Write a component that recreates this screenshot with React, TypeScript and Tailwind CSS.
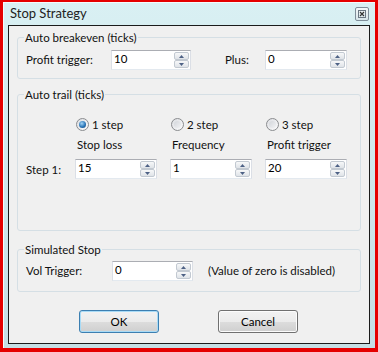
import React from "react";

function Spin({ value, w }: { value: string; w: string }) {
  return (
    <div className={`flex h-[20px] ${w} border border-[#abadb3] border-x-[#dbdfe6] border-b-[#e3e9ef] bg-white`}>
      <div className="flex-1 pl-[2px] leading-[16px] text-black">{value}</div>
      <div className="flex w-[16px] flex-col py-[1px] pr-[1px]">
        <div className="flex h-[8px] items-center justify-center rounded-[2px] border border-[#c2c9d1] bg-gradient-to-b from-[#f7f8f9] to-[#dfe3e8]">
          <svg width="5" height="3" viewBox="0 0 5 3">
            <path d="M0 3 L2.5 0 L5 3 Z" fill="#4d6185" />
          </svg>
        </div>
        <div className="flex h-[8px] items-center justify-center rounded-[2px] border border-[#c2c9d1] bg-gradient-to-b from-[#f7f8f9] to-[#dfe3e8]">
          <svg width="5" height="3" viewBox="0 0 5 3">
            <path d="M0 0 L5 0 L2.5 3 Z" fill="#4d6185" />
          </svg>
        </div>
      </div>
    </div>
  );
}

function Radio({ label, checked }: { label: string; checked?: boolean }) {
  return (
    <div className="flex items-center gap-[3px]">
      <div className="flex h-[13px] w-[13px] items-center justify-center rounded-full border border-[#8a8c8f] bg-gradient-to-br from-[#dcdee2] to-[#fbfbfc]">
        {checked ? (
          <div className="h-[7px] w-[7px] rounded-full bg-[radial-gradient(circle_at_40%_35%,#a4d4f5,#2b77b9_55%,#0d3b6e)]" />
        ) : (
          <div className="h-[7px] w-[7px] rounded-full bg-gradient-to-br from-[#d3d6db] to-[#f1f2f4]" />
        )}
      </div>
      <span>{label}</span>
    </div>
  );
}

function Group({ title, h, children }: { title: string; h: string; children: React.ReactNode }) {
  return (
    <div className={`${h} rounded-[3px] border border-[#d5dfe5] px-[8px]`}>
      <div className="-mt-[8px] -ml-[2px] w-fit bg-[#f0f0f0] px-[1px] leading-[15px]">{title}</div>
      {children}
    </div>
  );
}

function Btn({ label, focus }: { label: string; focus?: boolean }) {
  return (
    <div
      className={`flex h-[23px] w-[80px] items-center justify-center rounded-[3px] border ${
        focus ? "border-[#3c7fb1] shadow-[inset_0_0_0_1px_#a9dbf6]" : "border-[#707070] shadow-[inset_0_0_0_1px_#fcfcfc]"
      } bg-[linear-gradient(#f2f2f2,#ebebeb_50%,#dddddd_50%,#cfcfcf)] text-black`}
    >
      {label}
    </div>
  );
}

export default function App() {
  return (
    <div
      className="h-[352px] w-[378px] bg-[#e50000] pt-[2px] pr-[3px] pb-[4px] pl-[3px] text-[11.5px] text-[#111]"
      style={{ fontFamily: 'Lato, "Liberation Sans", sans-serif' }}
    >
      <div className="flex h-full flex-col bg-gradient-to-b from-[#d9f0f3] to-[#c5dfe5] px-[5px] pb-[4px] shadow-[inset_1px_1px_0_#f4fbfc]">
        <div className="flex h-[23px] items-center justify-between pl-[2px] pr-[1px]">
          <span className="text-[13px] text-[#222]">Stop Strategy</span>
          <div className="mt-[1px] flex h-[14px] w-[14px] items-center justify-center rounded-[2px] border border-[#7f8d99] bg-gradient-to-b from-[#f4f8f9] to-[#d7e5ea]">
            <svg width="8" height="8" viewBox="0 0 8 8">
              <rect x="0.5" y="0.5" width="7" height="7" fill="none" stroke="#6a7682" />
              <path d="M2 2 L6 6 M6 2 L2 6" stroke="#333" strokeWidth="1.2" />
            </svg>
          </div>
        </div>
        <div className="flex-1 border border-[#1b1b1b] bg-[#f0f0f0] px-[8px] pt-[11px]">
          <Group title="Auto breakeven (ticks)" h="h-[42px]">
            <div className="mt-[5px] flex items-center">
              <span className="w-[85px]">Profit trigger:</span>
              <Spin value="10" w="w-[80px]" />
              <span className="ml-[34px] w-[40px]">Plus:</span>
              <Spin value="0" w="w-[82px]" />
            </div>
          </Group>
          <div className="mt-[15px]">
            <Group title="Auto trail (ticks)" h="h-[137px]">
              <div className="mt-[14px] grid grid-cols-[49px_95px_95px_95px] items-center">
                <span />
                <div className="pl-[1px]">
                  <Radio label="1 step" checked />
                </div>
                <div className="pl-[1px]">
                  <Radio label="2 step" />
                </div>
                <div className="pl-[1px]">
                  <Radio label="3 step" />
                </div>
              </div>
              <div className="mt-[4px] grid grid-cols-[49px_95px_95px_95px] items-center leading-[15px]">
                <span />
                <span className="pl-[2px]">Stop loss</span>
                <span className="pl-[2px]">Frequency</span>
                <span className="pl-[2px]">Profit trigger</span>
              </div>
              <div className="mt-[7px] grid grid-cols-[49px_95px_95px_95px] items-center">
                <span>Step 1:</span>
                <Spin value="15" w="w-[82px]" />
                <Spin value="1" w="w-[82px]" />
                <Spin value="20" w="w-[82px]" />
              </div>
            </Group>
          </div>
          <div className="mt-[18px]">
            <Group title="Simulated Stop" h="h-[43px]">
              <div className="mt-[4px] flex items-center">
                <span className="w-[86px]">Vol Trigger:</span>
                <Spin value="0" w="w-[81px]" />
                <span className="ml-[15px]">(Value of zero is disabled)</span>
              </div>
            </Group>
          </div>
          <div className="mt-[18px] flex pl-[62px]">
            <Btn label="OK" focus />
            <div className="ml-[59px]">
              <Btn label="Cancel" />
            </div>
          </div>
        </div>
      </div>
    </div>
  );
}
